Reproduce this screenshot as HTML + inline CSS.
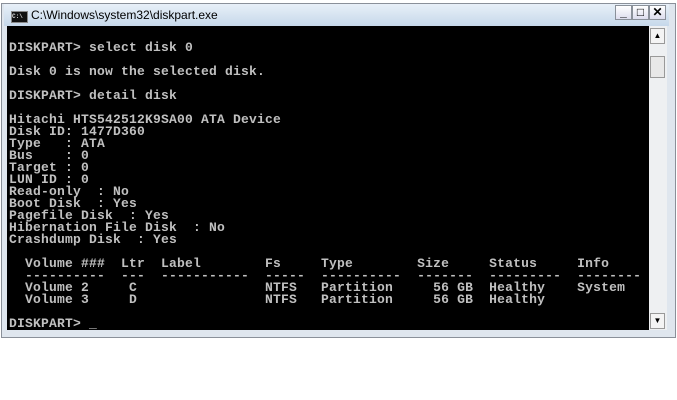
<!DOCTYPE html>
<html><head><style>
body{margin:0;width:677px;height:400px;background:#fff;position:relative;overflow:hidden;font-family:"Liberation Sans",sans-serif}
.win{position:absolute;left:1px;top:3px;width:675px;height:335px;background:#dfe6ee;border:1px solid #8a9099;box-sizing:border-box}
.title{position:absolute;left:4px;top:4px;width:665px;height:22px;background:linear-gradient(#e8f0f8,#c6d8ea)}
.ico{position:absolute;left:7px;top:7px;width:15px;height:10px;background:#111;border:1px solid #888;color:#ddd;font:bold 6px "Liberation Mono",monospace;line-height:10px}
.ttxt{position:absolute;left:27px;top:4px;font-size:12px;color:#000}
.btn{position:absolute;top:5px;width:17px;height:15px;background:linear-gradient(#fff,#dde);border:1px solid #8a9099;box-sizing:border-box;font:bold 12px "Liberation Sans",sans-serif;text-align:center;line-height:13px}
.con{position:absolute;left:7px;top:26px;width:642px;height:304px;background:#000}
pre{margin:0;position:absolute;left:2px;top:4px;color:#c0c0c0;font:bold 13px/12px "Liberation Mono",monospace;letter-spacing:0.2px}
.sb{position:absolute;left:649px;top:26px;width:18px;height:304px;background:#eef0f2}
.sbb{position:absolute;left:1px;width:15px;height:16px;background:#f4f4f4;border:1px solid #999;box-sizing:border-box;font-size:8px;text-align:center;line-height:14px}
</style></head><body>
<div class="win"></div>
<div class="title"><div class="ico">C:\</div><div class="ttxt">C:\Windows\system32\diskpart.exe</div></div>
<div class="btn" style="left:615px">_</div>
<div class="btn" style="left:632px">□</div>
<div class="btn" style="left:649px">✕</div>
<div class="con"><pre>

DISKPART&gt; select disk 0

Disk 0 is now the selected disk.

DISKPART&gt; detail disk

Hitachi HTS542512K9SA00 ATA Device
Disk ID: 1477D360
Type   : ATA
Bus    : 0
Target : 0
LUN ID : 0
Read-only  : No
Boot Disk  : Yes
Pagefile Disk  : Yes
Hibernation File Disk  : No
Crashdump Disk  : Yes

  Volume ###  Ltr  Label        Fs     Type        Size     Status     Info
  ----------  ---  -----------  -----  ----------  -------  ---------  --------
  Volume 2     C                NTFS   Partition     56 GB  Healthy    System
  Volume 3     D                NTFS   Partition     56 GB  Healthy

DISKPART&gt; _</pre></div>
<div class="sb">
<div class="sbb" style="top:2px">▲</div>
<div class="sbb" style="top:30px;height:22px;background:#e8e8e8"></div>
<div class="sbb" style="top:287px">▼</div>
</div>
</body></html>
